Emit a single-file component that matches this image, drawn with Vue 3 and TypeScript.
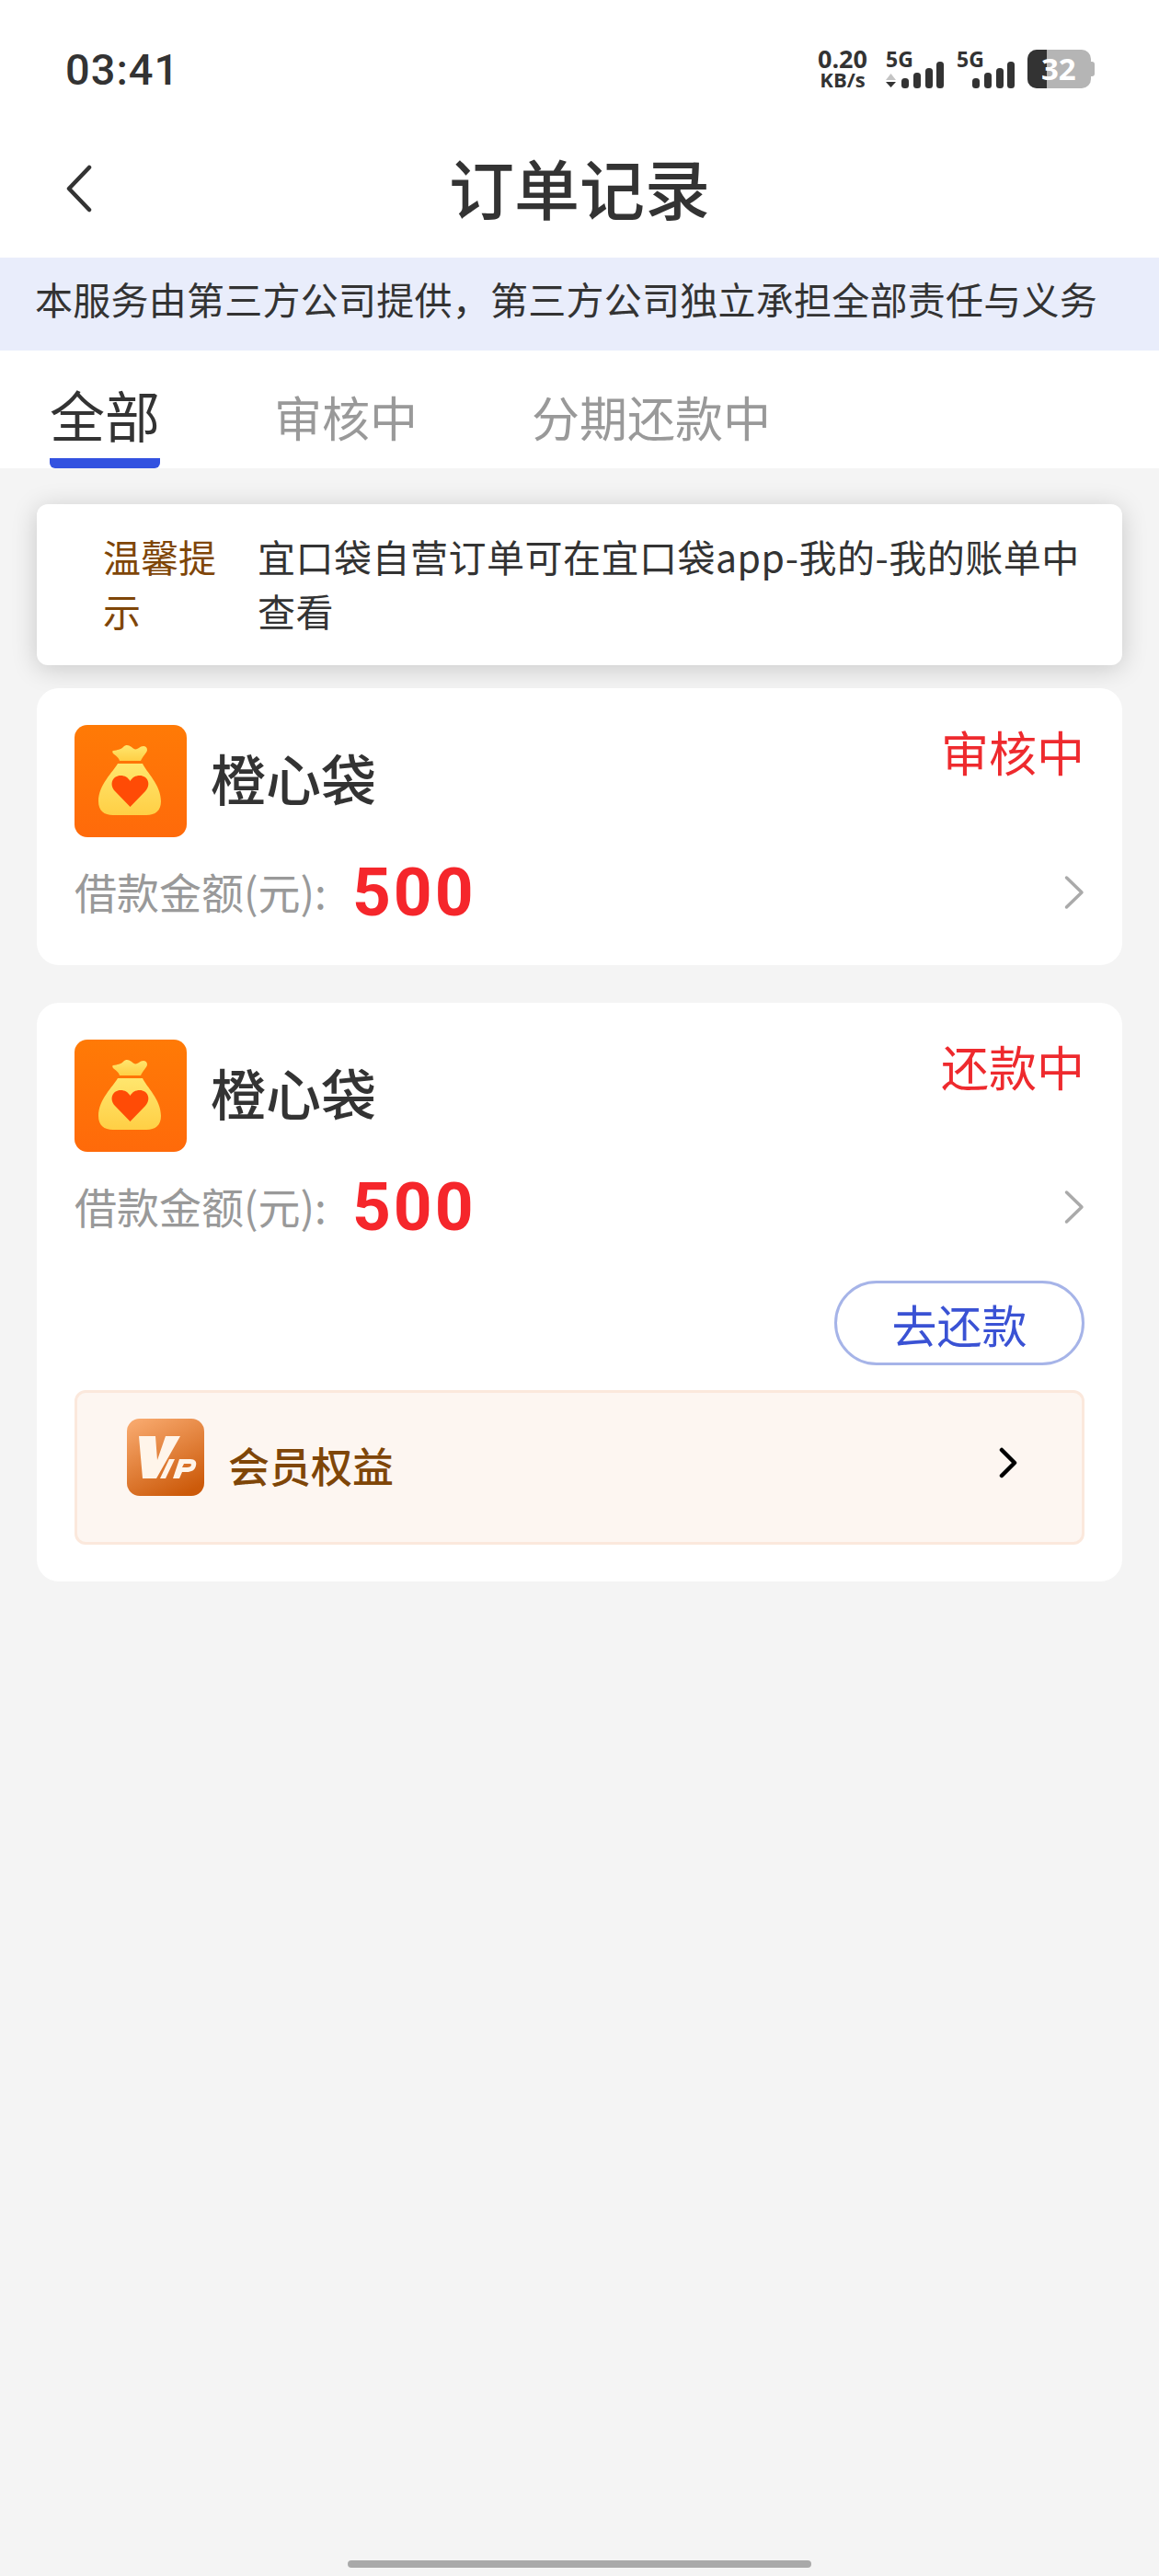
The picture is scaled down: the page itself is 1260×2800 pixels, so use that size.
<script setup lang="ts">
interface Order {
  id: number
  name: string
  status: string
  amount: number
  canRepay: boolean
}

const tabs = ['全部', '审核中', '分期还款中']

const orders: Order[] = [
  { id: 1, name: '橙心袋', status: '审核中', amount: 500, canRepay: false },
  { id: 2, name: '橙心袋', status: '还款中', amount: 500, canRepay: true }
]

const sims = [
  { id: 'a', arrows: true },
  { id: 'b', arrows: false }
]
</script>

<template>
  <div class="page">
    <header class="head">
      <div class="status">
        <span class="time">03:41</span>
        <div class="sys">
          <div class="speed"><b>0.20</b><b>KB/s</b></div>
          <div v-for="sim in sims" :key="sim.id" class="sim">
            <span class="net">5G</span>
            <svg width="63" height="42" viewBox="0 0 63 42">
              <template v-if="sim.arrows">
                <path d="M5.500 26l5.500 7H0z" fill="#c4c4c4" />
                <path d="M5.500 41l5.500-6H0z" fill="#333" />
              </template>
              <rect x="17" y="31" width="8" height="11" rx="3.500" fill="#333" />
              <rect x="30" y="25" width="8" height="17" rx="3.500" fill="#333" />
              <rect x="43" y="20" width="8" height="22" rx="3.500" fill="#333" />
              <rect x="55" y="13" width="8" height="29" rx="3.500" fill="#333" />
            </svg>
          </div>
          <div class="battery">
            <svg width="73" height="42" viewBox="0 0 73 42">
              <path d="M68 13h2a3 3 0 0 1 3 3v10a3 3 0 0 1-3 3h-2z" fill="#b5b5b5" />
              <rect x="0" y="0" width="69" height="42" rx="10" fill="#b5b5b5" />
              <path d="M10 0h11v42H10A10 10 0 0 1 0 32V10A10 10 0 0 1 10 0z" fill="#333" />
            </svg>
            <span>32</span>
          </div>
        </div>
      </div>
      <div class="nav">
        <svg class="back" width="34" height="52" viewBox="0 0 34 52">
          <path d="M29 3L7 26l22 23" fill="none" stroke="#333" stroke-width="4.500" stroke-linecap="round" stroke-linejoin="round" />
        </svg>
        <h1>订单记录</h1>
      </div>
    </header>

    <div class="notice">本服务由第三方公司提供，第三方公司独立承担全部责任与义务</div>

    <nav class="tabs">
      <div v-for="(tab, i) in tabs" :key="tab" class="tab" :class="{ active: i === 0 }">{{ tab }}</div>
    </nav>

    <main class="list">
      <section class="tip">
        <div class="tip-label">温馨提示</div>
        <div class="tip-text">宜口袋自营订单可在宜口袋app-我的-我的账单中查看</div>
      </section>

      <article v-for="order in orders" :key="order.id" class="card">
        <div class="card-top">
          <svg class="logo" width="122" height="122" viewBox="0 0 122 122">
            <defs>
              <linearGradient :id="`bg${order.id}`" x1="0" y1="0" x2="0" y2="1">
                <stop offset="0" stop-color="#ff7a06" />
                <stop offset="1" stop-color="#ff6a0a" />
              </linearGradient>
              <linearGradient :id="`bag${order.id}`" x1="0" y1="0" x2="0" y2="1">
                <stop offset="0" stop-color="#ffe66e" />
                <stop offset="1" stop-color="#ffcf45" />
              </linearGradient>
            </defs>
            <rect width="122" height="122" rx="14" :fill="`url(#bg${order.id})`" />
            <path d="M42 28c5-1 8-1 11-4 3-3 6-2 9 0 3 3 5 3 8 1 3-3 9-3 9 2 0 3-5 7-7 12H49c-1-4-5-6-7-8-1-1-1-3 0-3z" :fill="`url(#bag${order.id})`" />
            <path d="M47 42h27c4 9 20 23 20 41 0 10-6 15-16 15H42c-10 0-16-5-16-15 0-18 16-32 21-41z" :fill="`url(#bag${order.id})`" />
            <path d="M60.500 89L44 72c-7-8-2-17 6-17 5 0 8 2 10.500 6 2.500-4 5.500-6 10.500-6 8 0 13 9 6 17z" fill="#ff4b06" />
          </svg>
          <div class="name">{{ order.name }}</div>
          <div class="state">{{ order.status }}</div>
        </div>
        <div class="amount-row">
          <span class="amount-label">借款金额(元):</span>
          <span class="amount">{{ order.amount }}</span>
          <svg class="more" width="22" height="38" viewBox="0 0 22 38">
            <path d="M2.500 3L19 19 2.500 35" fill="none" stroke="#aaa" stroke-width="3.500" stroke-linecap="round" stroke-linejoin="round" />
          </svg>
        </div>
        <template v-if="order.canRepay">
          <div class="actions">
            <button class="repay">去还款</button>
          </div>
          <div class="vip">
            <svg width="84" height="84" viewBox="0 0 84 84">
              <defs>
                <linearGradient id="vipbg" x1="0.2" y1="0" x2="0.7" y2="1">
                  <stop offset="0" stop-color="#f7a76b" />
                  <stop offset="1" stop-color="#cc5a0a" />
                </linearGradient>
              </defs>
              <rect width="84" height="84" rx="14" fill="url(#vipbg)" />
              <path d="M13 19h18l2 26 9-26h16L32 65H17z" fill="#fff5ea" />
              <path d="M46 44h6L42 65h-6z" fill="#fff5ea" />
              <path d="M57 44h12c5 0 7 3 6 7-1 5-5 7-10 7h-5l-3 7h-7zm5 5l-2 4h5c3 0 5-1 5-3 0-1-1-1-3-1z" fill="#fff5ea" fill-rule="evenodd" />
            </svg>
            <span class="vip-text">会员权益</span>
            <svg class="vip-more" width="20" height="34" viewBox="0 0 20 34">
              <path d="M3 3l14 14L3 31" fill="none" stroke="#000" stroke-width="4.500" stroke-linecap="round" stroke-linejoin="round" />
            </svg>
          </div>
        </template>
      </article>
    </main>

    <div class="home-bar"></div>
  </div>
</template>

<style>
html,
body {
  margin: 0;
  background: #f4f4f4;
}
</style>

<style scoped>
.page {
  position: relative;
  width: 1260px;
  height: 2800px;
  background: #f4f4f4;
  font-family: 'Noto Sans CJK SC', 'Noto Sans', sans-serif;
  color: #333;
  overflow: hidden;
}

.head {
  background: #fff;
}

.status {
  height: 150px;
  display: flex;
  align-items: center;
  justify-content: space-between;
  padding: 0 70px 0 71px;
  box-sizing: border-box;
}

.time {
  font-family: Roboto, sans-serif;
  font-size: 47px;
  font-weight: 500;
  letter-spacing: 1px;
}

.sys {
  display: flex;
  align-items: center;
  gap: 14px;
}

.speed {
  display: flex;
  flex-direction: column;
  align-items: center;
  margin-right: 6px;
  font-family: 'Open Sans', sans-serif;
  font-size: 27px;
  line-height: 23px;
}

.speed b:last-child {
  font-size: 22px;
}

.sim {
  position: relative;
  width: 63px;
  height: 42px;
}

.sim svg {
  display: block;
}

.net {
  position: absolute;
  left: 0;
  top: 0;
  font-family: 'Open Sans', sans-serif;
  font-size: 23px;
  font-weight: 700;
  line-height: 20px;
  color: #333;
}

.battery {
  position: relative;
  width: 73px;
  height: 42px;
}

.battery svg {
  display: block;
}

.battery span {
  position: absolute;
  left: 15px;
  top: 0;
  font-family: 'Open Sans', sans-serif;
  font-size: 33px;
  font-weight: 700;
  line-height: 42px;
  color: #fff;
}

.nav {
  position: relative;
  height: 130px;
  display: flex;
  align-items: center;
  justify-content: center;
}

.back {
  position: absolute;
  left: 68px;
  top: 29px;
}

h1 {
  margin: 0 0 27px;
  font-size: 71px;
  font-weight: 500;
  line-height: 90px;
}

.notice {
  height: 101px;
  background: #e9edfb;
  padding-left: 38px;
  font-size: 41px;
  letter-spacing: 0.25px;
  line-height: 88px;
  white-space: nowrap;
}

.tabs {
  height: 128px;
  background: #fff;
  display: flex;
  gap: 124px;
  padding-left: 54px;
}

.tab {
  height: 128px;
  box-sizing: border-box;
  padding-top: 20px;
  font-size: 52px;
  line-height: 104px;
  color: #999;
}

.tab.active {
  font-size: 60px;
  line-height: 98px;
  color: #333;
  border-bottom: 11px solid #3352e0;
  border-radius: 0 0 6px 6px;
}

.list {
  padding: 39px 40px 0;
  display: flex;
  flex-direction: column;
}

.tip {
  display: flex;
  height: 175px;
  box-sizing: border-box;
  margin-bottom: 25px;
  padding: 27px 30px 0 72px;
  background: #fff;
  border-radius: 12px;
  box-shadow: 0 4px 28px rgba(0, 0, 0, 0.18);
  font-size: 41px;
  line-height: 59px;
}

.tip-label {
  width: 124px;
  flex: none;
  margin-right: 44px;
  color: #7f4608;
}

.tip-text {
  color: #333;
  letter-spacing: 0.5px;
}

.card {
  background: #fff;
  border-radius: 24px;
  padding: 40px 41px 40px 41px;
  margin-bottom: 41px;
}

.card-top {
  display: flex;
  align-items: center;
  height: 122px;
}

.logo {
  flex: none;
}

.name {
  margin: 0 0 8px 26px;
  font-size: 60px;
  font-weight: 500;
  line-height: 122px;
}

.state {
  align-self: flex-start;
  margin-left: auto;
  font-size: 52px;
  line-height: 58px;
  color: #ee2a2e;
}

.amount-row {
  display: flex;
  align-items: center;
  height: 72px;
  margin: 24px 0 3px;
}

.amount-label {
  margin-bottom: 4px;
  font-size: 46px;
  color: #999;
}

.amount {
  margin-left: 28px;
  font-family: Roboto, sans-serif;
  font-size: 73px;
  font-weight: 700;
  letter-spacing: 3px;
  color: #f5262b;
}

.more {
  margin-left: auto;
}

.actions {
  display: flex;
  justify-content: flex-end;
  margin-top: 44px;
}

.repay {
  width: 272px;
  height: 92px;
  padding: 0;
  background: #fff;
  border: 3px solid #a6b4e8;
  border-radius: 46px;
  font-family: inherit;
  font-size: 49px;
  color: #3a52d4;
}

.vip {
  display: flex;
  align-items: flex-start;
  height: 168px;
  box-sizing: border-box;
  margin-top: 27px;
  padding: 28px 70px 0 54px;
  background: #fdf6f1;
  border: 3px solid #fbe8dc;
  border-radius: 12px;
}

.vip-text {
  margin: 21px 0 0 26px;
  font-size: 45px;
  font-weight: 500;
  line-height: 60px;
  color: #7f4608;
}

.vip-more {
  margin: 31px 0 0 auto;
}

.home-bar {
  position: absolute;
  left: 378px;
  top: 2783px;
  width: 504px;
  height: 8px;
  border-radius: 4px;
  background: #a9a9a9;
}
</style>
